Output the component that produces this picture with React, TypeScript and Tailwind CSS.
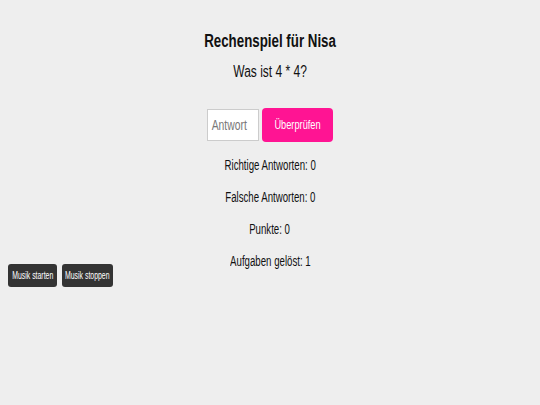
export default function App() {
  return (
    <div
      className="min-h-[405px] bg-[#eeeeee] text-[#111]"
      style={{ fontFamily: '"Liberation Sans", Arial, sans-serif' }}
    >
      <div className="flex flex-col items-center pt-[30px]">
        <h1 className="text-[18px] leading-[22px] font-bold scale-x-[0.74]">Rechenspiel für Nisa</h1>
        <p className="mt-[10px] text-[16px] leading-[20px] scale-x-[0.75]">Was ist 4 * 4?</p>
        <div className="mt-[26px] flex items-center gap-[3px]">
          <div className="w-[52px] h-[32px] bg-white border border-[#ccc] flex items-center overflow-hidden">
            <span className="block origin-left scale-x-[0.74] pl-[5px] text-[14px] text-[#777] whitespace-nowrap">Antwort</span>
          </div>
          <button className="w-[71px] h-[34px] rounded-[4px] bg-[#ff1493] text-white text-[13px] flex items-center justify-center">
            <span className="block scale-x-[0.71] whitespace-nowrap">Überprüfen</span>
          </button>
        </div>
        <div className="mt-[14px] flex flex-col items-center gap-[14px] text-[14px] leading-[18px]">
          <p className="scale-x-[0.69]">Richtige Antworten: 0</p>
          <p className="scale-x-[0.69]">Falsche Antworten: 0</p>
          <p className="scale-x-[0.69]">Punkte: 0</p>
          <p className="scale-x-[0.69]">Aufgaben gelöst: 1</p>
        </div>
      </div>
      <div className="flex gap-[5px] px-[8px] mt-[-6px]">
        <button className="w-[49px] h-[23px] rounded-[3px] bg-[#333] text-white text-[10px] flex items-center justify-center">
          <span className="block scale-x-[0.69] whitespace-nowrap">Musik starten</span>
        </button>
        <button className="w-[51px] h-[23px] rounded-[3px] bg-[#333] text-white text-[10px] flex items-center justify-center">
          <span className="block scale-x-[0.69] whitespace-nowrap">Musik stoppen</span>
        </button>
      </div>
    </div>
  );
}
